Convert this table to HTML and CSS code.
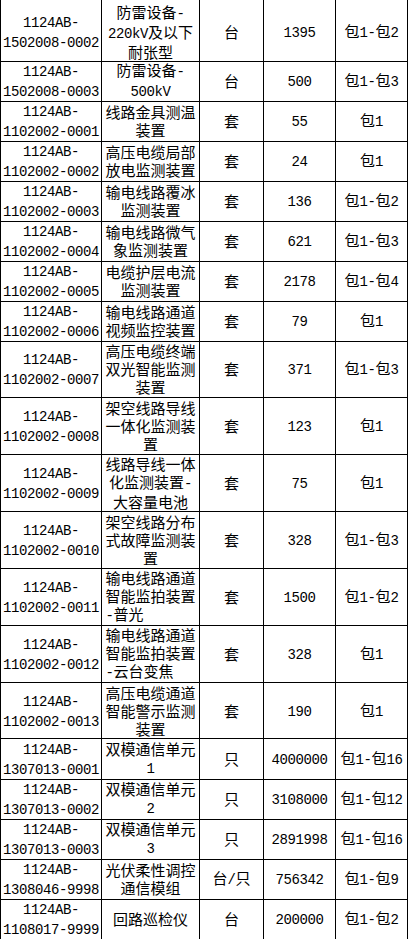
FILE: index.html
```html
<!DOCTYPE html>
<html lang="zh-CN">
<head>
<meta charset="utf-8">
<title>设备清单</title>
<link rel="stylesheet" href="styles.css">
</head>
<body>
<div class="sheet">
  <div class="row first">
    <div class="cell"><div class="txt"><span class="l">1124AB-<br>1502008-0002</span></div></div>
    <div class="cell"><div class="txt">防雷设备<span class="l">-</span><br><span class="l">220kV</span>及以下<br>耐张型</div></div>
    <div class="cell"><div class="txt">台</div></div>
    <div class="cell"><div class="txt"><span class="l">1395</span></div></div>
    <div class="cell"><div class="txt">包<span class="l">1-</span>包<span class="l">2</span></div></div>
  </div>
  <div class="row two">
    <div class="cell"><div class="txt"><span class="l">1124AB-<br>1502008-0003</span></div></div>
    <div class="cell"><div class="txt">防雷设备<span class="l">-</span><br><span class="l">500kV</span></div></div>
    <div class="cell"><div class="txt">台</div></div>
    <div class="cell"><div class="txt"><span class="l">500</span></div></div>
    <div class="cell"><div class="txt">包<span class="l">1-</span>包<span class="l">3</span></div></div>
  </div>
  <div class="row two">
    <div class="cell"><div class="txt"><span class="l">1124AB-<br>1102002-0001</span></div></div>
    <div class="cell"><div class="txt">线路金具测温<br>装置</div></div>
    <div class="cell"><div class="txt">套</div></div>
    <div class="cell"><div class="txt"><span class="l">55</span></div></div>
    <div class="cell"><div class="txt">包<span class="l">1</span></div></div>
  </div>
  <div class="row two">
    <div class="cell"><div class="txt"><span class="l">1124AB-<br>1102002-0002</span></div></div>
    <div class="cell"><div class="txt">高压电缆局部<br>放电监测装置</div></div>
    <div class="cell"><div class="txt">套</div></div>
    <div class="cell"><div class="txt"><span class="l">24</span></div></div>
    <div class="cell"><div class="txt">包<span class="l">1</span></div></div>
  </div>
  <div class="row two">
    <div class="cell"><div class="txt"><span class="l">1124AB-<br>1102002-0003</span></div></div>
    <div class="cell"><div class="txt">输电线路覆冰<br>监测装置</div></div>
    <div class="cell"><div class="txt">套</div></div>
    <div class="cell"><div class="txt"><span class="l">136</span></div></div>
    <div class="cell"><div class="txt">包<span class="l">1-</span>包<span class="l">2</span></div></div>
  </div>
  <div class="row two">
    <div class="cell"><div class="txt"><span class="l">1124AB-<br>1102002-0004</span></div></div>
    <div class="cell"><div class="txt">输电线路微气<br>象监测装置</div></div>
    <div class="cell"><div class="txt">套</div></div>
    <div class="cell"><div class="txt"><span class="l">621</span></div></div>
    <div class="cell"><div class="txt">包<span class="l">1-</span>包<span class="l">3</span></div></div>
  </div>
  <div class="row two">
    <div class="cell"><div class="txt"><span class="l">1124AB-<br>1102002-0005</span></div></div>
    <div class="cell"><div class="txt">电缆护层电流<br>监测装置</div></div>
    <div class="cell"><div class="txt">套</div></div>
    <div class="cell"><div class="txt"><span class="l">2178</span></div></div>
    <div class="cell"><div class="txt">包<span class="l">1-</span>包<span class="l">4</span></div></div>
  </div>
  <div class="row two">
    <div class="cell"><div class="txt"><span class="l">1124AB-<br>1102002-0006</span></div></div>
    <div class="cell"><div class="txt">输电线路通道<br>视频监控装置</div></div>
    <div class="cell"><div class="txt">套</div></div>
    <div class="cell"><div class="txt"><span class="l">79</span></div></div>
    <div class="cell"><div class="txt">包<span class="l">1</span></div></div>
  </div>
  <div class="row three">
    <div class="cell"><div class="txt"><span class="l">1124AB-<br>1102002-0007</span></div></div>
    <div class="cell"><div class="txt">高压电缆终端<br>双光智能监测<br>装置</div></div>
    <div class="cell"><div class="txt">套</div></div>
    <div class="cell"><div class="txt"><span class="l">371</span></div></div>
    <div class="cell"><div class="txt">包<span class="l">1-</span>包<span class="l">3</span></div></div>
  </div>
  <div class="row three">
    <div class="cell"><div class="txt"><span class="l">1124AB-<br>1102002-0008</span></div></div>
    <div class="cell"><div class="txt">架空线路导线<br>一体化监测装<br>置</div></div>
    <div class="cell"><div class="txt">套</div></div>
    <div class="cell"><div class="txt"><span class="l">123</span></div></div>
    <div class="cell"><div class="txt">包<span class="l">1</span></div></div>
  </div>
  <div class="row three">
    <div class="cell"><div class="txt"><span class="l">1124AB-<br>1102002-0009</span></div></div>
    <div class="cell"><div class="txt">线路导线一体<br>化监测装置<span class="l">-</span><br>大容量电池</div></div>
    <div class="cell"><div class="txt">套</div></div>
    <div class="cell"><div class="txt"><span class="l">75</span></div></div>
    <div class="cell"><div class="txt">包<span class="l">1</span></div></div>
  </div>
  <div class="row three">
    <div class="cell"><div class="txt"><span class="l">1124AB-<br>1102002-0010</span></div></div>
    <div class="cell"><div class="txt">架空线路分布<br>式故障监测装<br>置</div></div>
    <div class="cell"><div class="txt">套</div></div>
    <div class="cell"><div class="txt"><span class="l">328</span></div></div>
    <div class="cell"><div class="txt">包<span class="l">1-</span>包<span class="l">3</span></div></div>
  </div>
  <div class="row three">
    <div class="cell"><div class="txt"><span class="l">1124AB-<br>1102002-0011</span></div></div>
    <div class="cell"><div class="txt">输电线路通道<br>智能监拍装置<span class="start"><span class="l">-</span>普光</span></div></div>
    <div class="cell"><div class="txt">套</div></div>
    <div class="cell"><div class="txt"><span class="l">1500</span></div></div>
    <div class="cell"><div class="txt">包<span class="l">1-</span>包<span class="l">2</span></div></div>
  </div>
  <div class="row three">
    <div class="cell"><div class="txt"><span class="l">1124AB-<br>1102002-0012</span></div></div>
    <div class="cell"><div class="txt">输电线路通道<br>智能监拍装置<span class="start"><span class="l">-</span>云台变焦</span></div></div>
    <div class="cell"><div class="txt">套</div></div>
    <div class="cell"><div class="txt"><span class="l">328</span></div></div>
    <div class="cell"><div class="txt">包<span class="l">1</span></div></div>
  </div>
  <div class="row three last3">
    <div class="cell"><div class="txt"><span class="l">1124AB-<br>1102002-0013</span></div></div>
    <div class="cell"><div class="txt">高压电缆通道<br>智能警示监测<br>装置</div></div>
    <div class="cell"><div class="txt">套</div></div>
    <div class="cell"><div class="txt"><span class="l">190</span></div></div>
    <div class="cell"><div class="txt">包<span class="l">1</span></div></div>
  </div>
  <div class="row two">
    <div class="cell"><div class="txt"><span class="l">1124AB-<br>1307013-0001</span></div></div>
    <div class="cell"><div class="txt">双模通信单元<br><span class="l">1</span></div></div>
    <div class="cell"><div class="txt">只</div></div>
    <div class="cell"><div class="txt"><span class="l">4000000</span></div></div>
    <div class="cell"><div class="txt">包<span class="l">1-</span>包<span class="l">16</span></div></div>
  </div>
  <div class="row two">
    <div class="cell"><div class="txt"><span class="l">1124AB-<br>1307013-0002</span></div></div>
    <div class="cell"><div class="txt">双模通信单元<br><span class="l">2</span></div></div>
    <div class="cell"><div class="txt">只</div></div>
    <div class="cell"><div class="txt"><span class="l">3108000</span></div></div>
    <div class="cell"><div class="txt">包<span class="l">1-</span>包<span class="l">12</span></div></div>
  </div>
  <div class="row two">
    <div class="cell"><div class="txt"><span class="l">1124AB-<br>1307013-0003</span></div></div>
    <div class="cell"><div class="txt">双模通信单元<br><span class="l">3</span></div></div>
    <div class="cell"><div class="txt">只</div></div>
    <div class="cell"><div class="txt"><span class="l">2891998</span></div></div>
    <div class="cell"><div class="txt">包<span class="l">1-</span>包<span class="l">16</span></div></div>
  </div>
  <div class="row two">
    <div class="cell"><div class="txt"><span class="l">1124AB-<br>1308046-9998</span></div></div>
    <div class="cell"><div class="txt">光伏柔性调控<br>通信模组</div></div>
    <div class="cell"><div class="txt">台<span class="l">/</span>只</div></div>
    <div class="cell"><div class="txt"><span class="l">756342</span></div></div>
    <div class="cell"><div class="txt">包<span class="l">1-</span>包<span class="l">9</span></div></div>
  </div>
  <div class="row two">
    <div class="cell"><div class="txt"><span class="l">1124AB-<br>1108017-9999</span></div></div>
    <div class="cell"><div class="txt">回路巡检仪</div></div>
    <div class="cell"><div class="txt">台</div></div>
    <div class="cell"><div class="txt"><span class="l">200000</span></div></div>
    <div class="cell"><div class="txt">包<span class="l">1-</span>包<span class="l">2</span></div></div>
  </div>
</div>
</body>
</html>
```
FILE: styles.css
```css
html, body {
  margin: 0;
  padding: 0;
  background: #ffffff;
}

body {
  font-family: "Noto Sans CJK SC", "Noto Sans", sans-serif;
  font-size: 15px;
  line-height: 18px;
  color: #000000;
}

.sheet {
  width: 408px;
  box-sizing: border-box;
  border-left: 1px solid #000;
}

.row {
  display: grid;
  grid-template-columns: 101px 98px 64px 72px 72px;
}

.row.first { height: 61px; }
.row.two { height: 40px; }
.row.three { height: 57px; }
.row.three.last3 { height: 56px; }

.cell {
  box-sizing: border-box;
  border-right: 1px solid #000;
  border-bottom: 1px solid #000;
  display: flex;
  align-items: center;
  justify-content: center;
  min-width: 0;
}

.txt {
  text-align: center;
  white-space: nowrap;
}

.start {
  display: block;
  text-align: left;
}

.row.first .cell {
  padding-top: 3px;
}

.l {
  font-family: "Liberation Mono", "DejaVu Sans Mono", monospace;
  font-size: 14px;
  letter-spacing: -0.4px;
}
```
